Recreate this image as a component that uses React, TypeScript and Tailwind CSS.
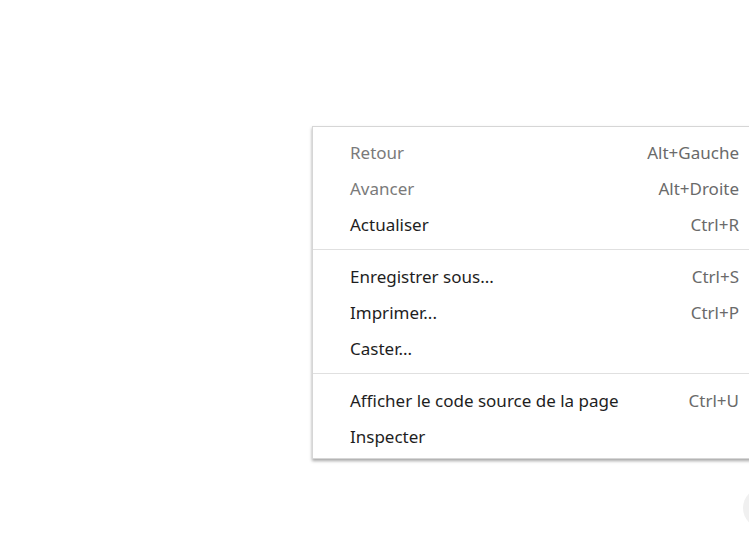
const groups = [
  [
    { label: 'Retour', shortcut: 'Alt+Gauche', disabled: true },
    { label: 'Avancer', shortcut: 'Alt+Droite', disabled: true },
    { label: 'Actualiser', shortcut: 'Ctrl+R' },
  ],
  [
    { label: 'Enregistrer sous...', shortcut: 'Ctrl+S' },
    { label: 'Imprimer...', shortcut: 'Ctrl+P' },
    { label: 'Caster...', shortcut: '' },
  ],
  [
    { label: 'Afficher le code source de la page', shortcut: 'Ctrl+U' },
    { label: 'Inspecter', shortcut: '' },
  ],
];

export default function App() {
  return (
    <div className="relative w-[749px] h-[559px] overflow-hidden bg-white font-['Noto_Sans',sans-serif]">
      {/* context menu */}
      <div className="absolute left-[312px] top-[126px] w-[470px] bg-white border border-[#d6d6d6] shadow-[0_2px_3px_rgba(0,0,0,0.35)] pt-[8px] pb-[3px]">
        {groups.map((group, gi) => (
          <div key={gi}>
            {gi > 0 && <div className="mt-[6px] mb-[9px] h-px bg-[#e0e0e0]" />}
            {group.map((item) => (
              <div
                key={item.label}
                className="flex h-[36px] items-center justify-between pl-[37px] pr-[42px] text-[17px]"
              >
                <span className={item.disabled ? 'text-[#7a7a7a]' : 'text-[#1e1e1e]'}>{item.label}</span>
                <span className="text-[#6a6a6a]">{item.shortcut}</span>
              </div>
            ))}
          </div>
        ))}
      </div>
      {/* partially visible round button */}
      <div className="absolute left-[743px] top-[488px] w-[40px] h-[40px] rounded-full bg-[#f0f0f0]" />
    </div>
  );
}
